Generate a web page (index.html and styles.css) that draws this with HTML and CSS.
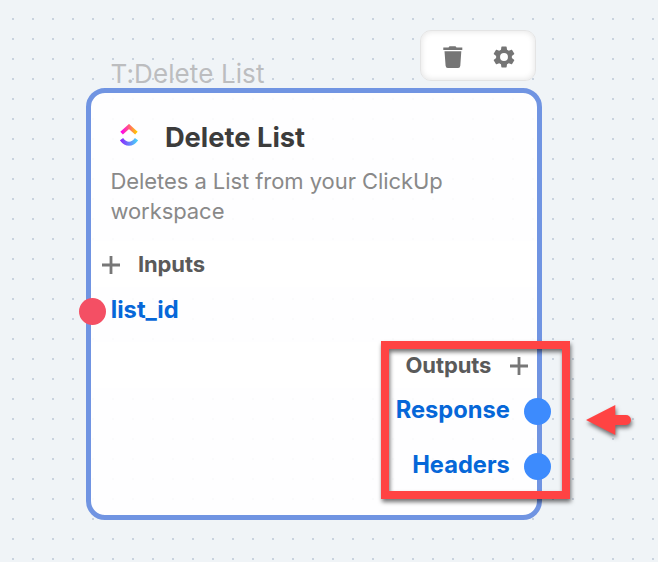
FILE: index.html
```html
<!DOCTYPE html>
<html lang="en">
<head>
<meta charset="utf-8">
<title>Delete List</title>
<link rel="stylesheet" href="styles.css">
</head>
<body>
<main class="canvas">
  <div class="toolbar">
    <svg class="tool trash" viewBox="0 0 20 22"><path d="M.3 1.5H5.5L6.5.2h6l1 1.3h5.8v2.6H.3zM1.5 5.3h16.8l-1 14.5q-.2 2.2-2.2 2.2H4.8q-2 0-2.2-2.2z"/></svg>
    <svg class="tool gear" viewBox="2 2 20 20"><path d="M19.14 12.94c.04-.3.06-.61.06-.94 0-.32-.02-.64-.07-.94l2.03-1.58c.18-.14.23-.41.12-.61l-1.92-3.32c-.12-.22-.37-.29-.59-.22l-2.39.96c-.5-.38-1.03-.7-1.62-.94l-.36-2.54c-.04-.24-.24-.41-.48-.41h-3.84c-.24 0-.43.17-.47.41l-.36 2.54c-.59.24-1.13.57-1.62.94l-2.39-.96c-.22-.08-.47 0-.59.22L2.74 8.87c-.12.21-.08.47.12.61l2.03 1.58c-.05.3-.09.63-.09.94s.02.64.07.94l-2.03 1.58c-.18.14-.23.41-.12.61l1.92 3.32c.12.22.37.29.59.22l2.39-.96c.5.38 1.03.7 1.62.94l.36 2.54c.05.24.24.41.48.41h3.84c.24 0 .44-.17.47-.41l.36-2.54c.59-.24 1.13-.56 1.62-.94l2.39.96c.22.08.47 0 .59-.22l1.92-3.32c.12-.22.07-.47-.12-.61l-2.01-1.58zM12 15.6a3.6 3.6 0 1 1 0-7.2 3.6 3.6 0 0 1 0 7.2z"/></svg>
  </div>
  <div class="node-label">T:Delete List</div>
  <section class="node">
    <header class="node-header">
      <svg class="logo" viewBox="0 0 18 22">
        <defs>
          <linearGradient id="warm"><stop offset="0" stop-color="#ff02f0"/><stop offset=".5" stop-color="#ff5f78"/><stop offset="1" stop-color="#ffc800"/></linearGradient>
          <linearGradient id="cool"><stop offset="0" stop-color="#8930fd"/><stop offset="1" stop-color="#49ccf9"/></linearGradient>
        </defs>
        <path d="M1.6 9.2 9 2.5l7.4 6.7" fill="none" stroke="url(#warm)" stroke-width="3.8"/>
        <path d="M1.5 15.2Q4.8 19.8 9 19.8t7.5-4.6" fill="none" stroke="url(#cool)" stroke-width="4"/>
      </svg>
      <h1 class="title">Delete List</h1>
    </header>
    <p class="description">Deletes a List from your ClickUp workspace</p>
    <div class="group inputs"><svg class="plus" viewBox="0 0 18 18"><path d="M9 0v18M0 9h18"/></svg><span>Inputs</span></div>
    <div class="port in"><i class="pin"></i><span>list_id</span></div>
    <div class="group outputs"><span>Outputs</span><svg class="plus" viewBox="0 0 18 18"><path d="M9 0v18M0 9h18"/></svg></div>
    <div class="port out response"><span>Response</span><i class="pin"></i></div>
    <div class="port out headers"><span>Headers</span><i class="pin"></i></div>
  </section>
  <div class="highlight"></div>
  <svg class="pointer" viewBox="0 0 46 30"><path d="M0 15 29.3 0v10H40a5 5 0 0 1 0 10H29.3v10z"/></svg>
</main>
</body>
</html>
```
FILE: styles.css
```css
* { box-sizing: border-box; }
body { margin: 0; font-family: Inter, sans-serif; }
.canvas {
  position: relative;
  width: 658px;
  height: 562px;
  overflow: hidden;
  background-color: #f0f4f7;
  background-image: linear-gradient(90deg, transparent 2px, #f0f4f7 2px), linear-gradient(#c9d3df 2px, #f0f4f7 2px);
  background-size: 20px 20px;
  background-position: 12px 18px;
}
.toolbar {
  position: absolute;
  left: 420px;
  top: 30px;
  width: 116px;
  height: 51px;
  display: flex;
  align-items: center;
  padding: 2px 0 0 22px;
  border: 1px solid #e4e4e4;
  border-radius: 11px;
  background: #fff;
  box-shadow: inset 0 0 6px rgba(0, 0, 0, .12);
}
.tool { fill: #757575; }
.trash { width: 20px; height: 22px; }
.gear { width: 22px; height: 22px; margin-left: 30px; }
.node-label {
  position: absolute;
  left: 110.5px;
  top: 58px;
  font-size: 26px;
  line-height: 32px;
  letter-spacing: .1px;
  color: #bcbdbf;
  white-space: nowrap;
}
.node {
  position: absolute;
  left: 86.4px;
  top: 88.3px;
  width: 455.4px;
  height: 432px;
  border: 5.5px solid #7094e2;
  border-radius: 19px;
  background: rgba(255, 255, 255, .9);
  background-clip: padding-box;
}
.node-header { display: flex; align-items: center; height: 86px; padding: 3px 0 0 28.5px; }
.logo { width: 18px; height: 22px; margin-top: -5px; }
.title { margin: 0 0 0 27px; font-size: 27.3px; line-height: 34px; font-weight: 700; color: #3c3c3c; white-space: nowrap; }
.description { margin: -13px 0 0; padding-left: 19px; width: 390px; height: 75px; font-size: 22px; line-height: 30px; letter-spacing: -.06px; color: #898989; }
.group { display: flex; align-items: center; height: 46px; background: #fff; font-size: 22px; font-weight: 700; letter-spacing: -.1px; color: #5a5a5a; }
.plus { width: 18px; height: 18px; fill: none; stroke: #777; stroke-width: 2.8; }
.inputs .plus { margin-top: 2px; }
.inputs { padding-left: 10.5px; gap: 18px; }
.outputs { justify-content: flex-end; padding-right: 9px; gap: 18.5px; margin-top: 9px; }
.outputs .plus { margin-top: 1px; }
.port { display: flex; align-items: center; height: 46px; font-size: 23.7px; font-weight: 700; color: #0667d8; }
.port span { margin-top: -3.5px; }
.pin { flex: none; width: 27.4px; height: 27.4px; border-radius: 50%; background: #3d8bfd; }
.in { gap: 4.5px; margin-left: -12.5px; padding-top: 2px; }
.in .pin { background: #f44f64; }
.out { justify-content: flex-end; gap: 14px; margin-right: -14.5px; }
.headers { margin-top: 9px; }
.highlight {
  position: absolute;
  left: 381px;
  top: 341px;
  width: 189px;
  height: 158px;
  border: 8px solid #ff4343;
  filter: drop-shadow(1px 3px 2px rgba(0, 0, 0, .55));
}
.pointer {
  position: absolute;
  left: 585.5px;
  top: 405px;
  width: 46px;
  height: 30px;
  overflow: visible;
  fill: #ff4343;
  filter: drop-shadow(1px 3px 2px rgba(0, 0, 0, .55));
}
```
